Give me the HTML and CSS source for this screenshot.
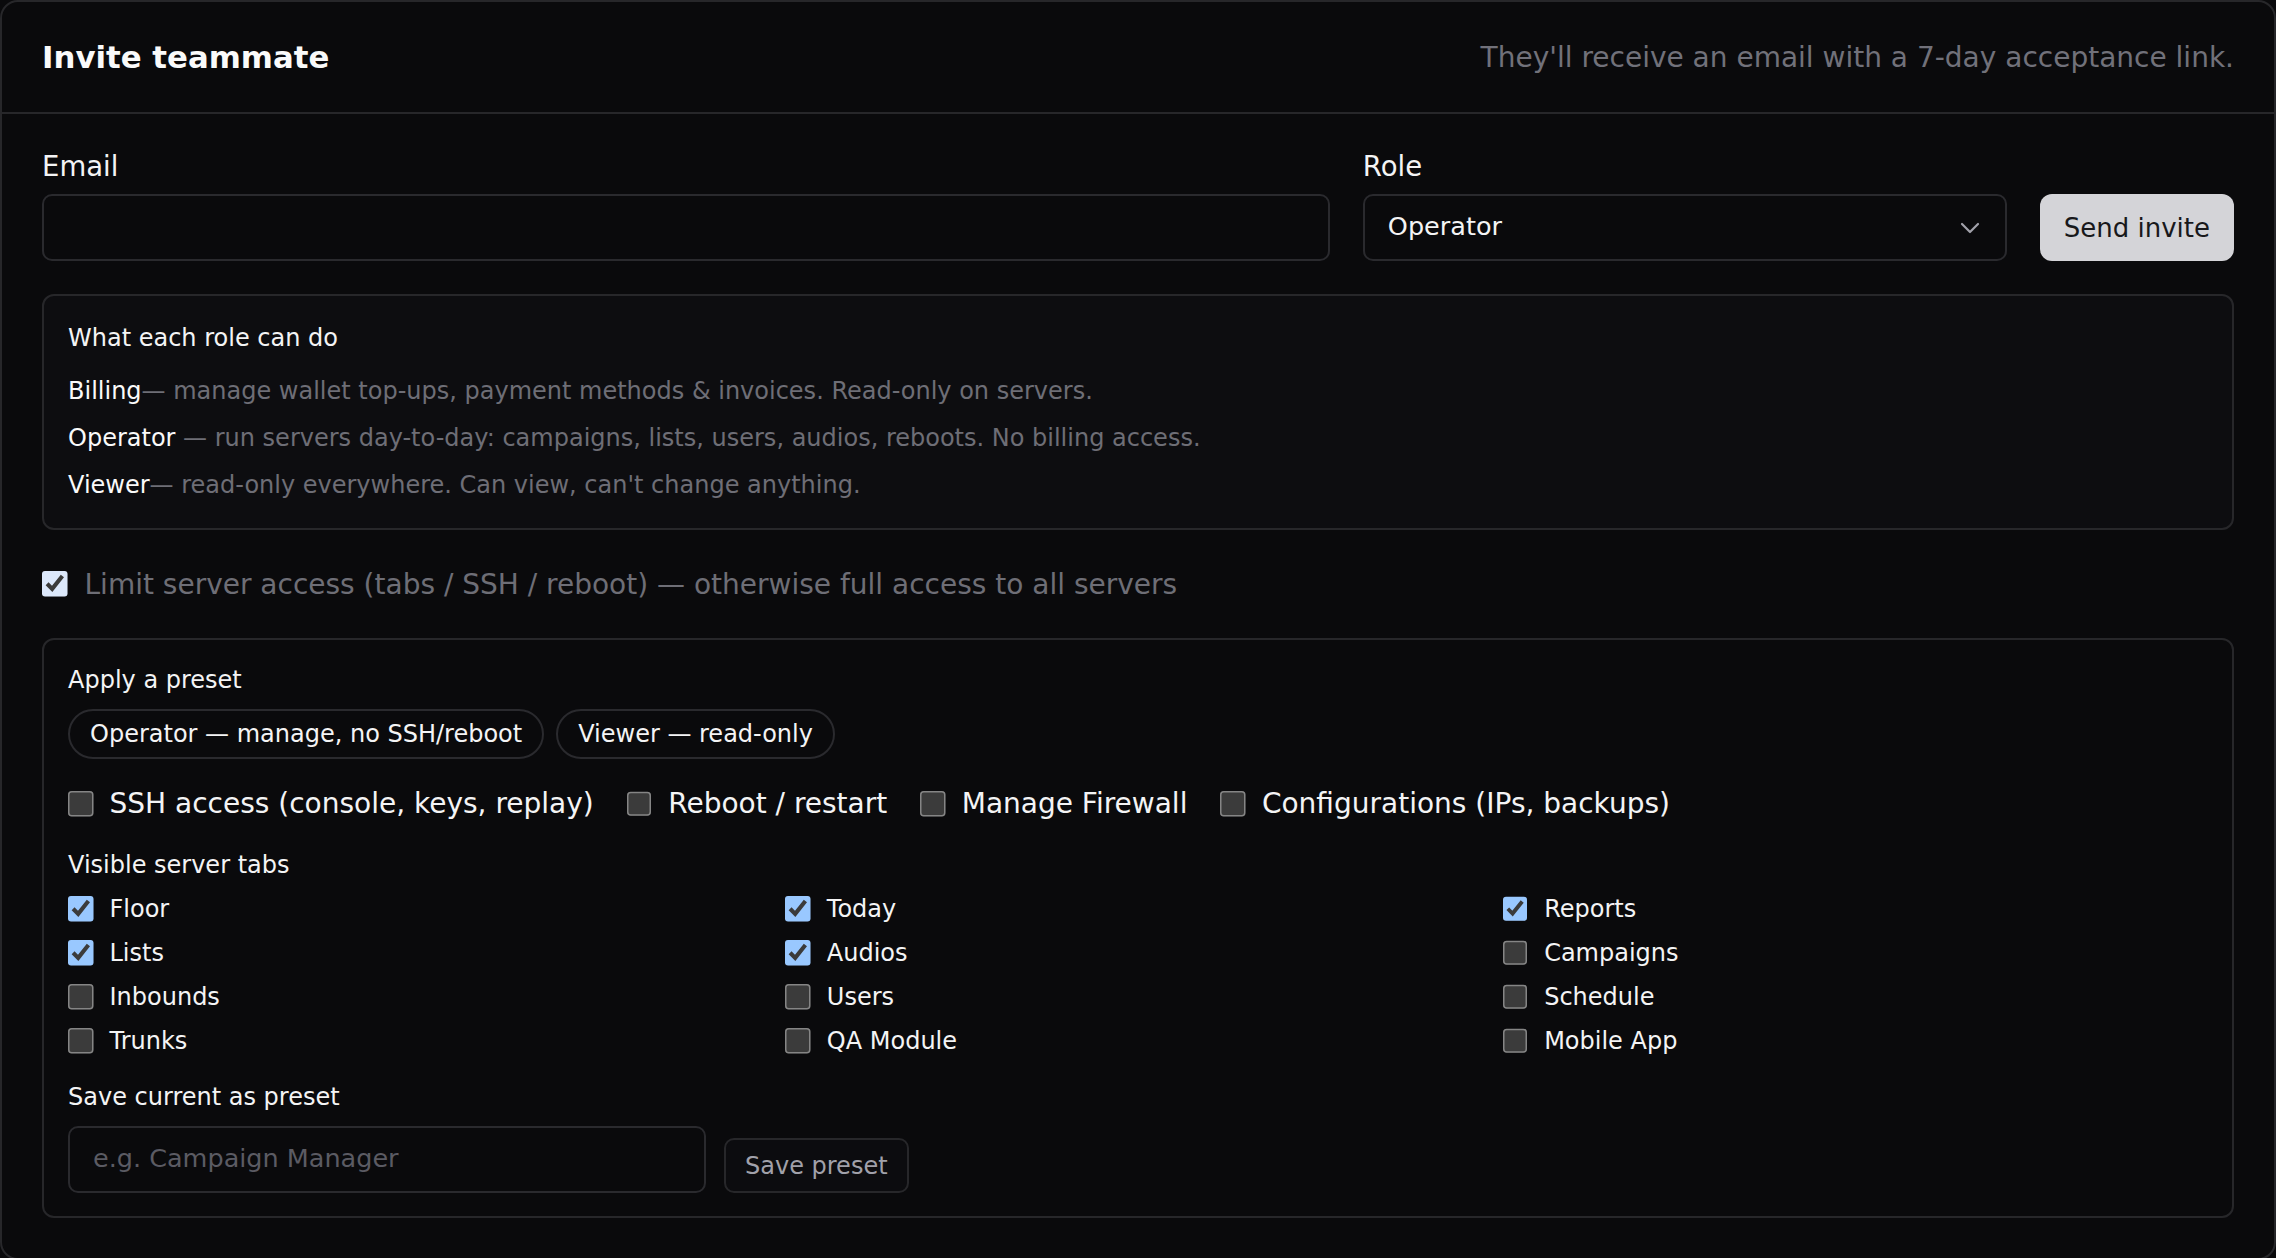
FILE: index.html
```html
<!DOCTYPE html>
<html lang="en">
<head>
  <meta charset="UTF-8">
  <meta name="viewport" content="width=device-width, initial-scale=1.0">
  <title>Invite teammate</title>
  <link rel="stylesheet" href="styles.css">
</head>
<body>
  <div class="card">
    <div class="card-head">
      <h2>Invite teammate</h2>
      <p class="head-note">They'll receive an email with a 7-day acceptance link.</p>
    </div>

    <div class="card-body">
      <div class="invite-row">
        <label class="field">
          <span class="field-label">Email</span>
          <input type="email" class="text-input">
        </label>
        <label class="field">
          <span class="field-label">Role</span>
          <span class="select-wrap">
            <select class="text-input">
              <option>Operator</option>
              <option>Billing</option>
              <option>Viewer</option>
            </select>
            <svg class="chevron" width="20" height="12" viewBox="0 0 20 12"><path d="M2 2 L10 10 L18 2" fill="none" stroke="#a1a1aa" stroke-width="2.2" stroke-linecap="round" stroke-linejoin="round"/></svg>
          </span>
        </label>
        <button class="btn-primary">Send invite</button>
      </div>

      <div class="roles">
        <div class="roles-title">What each role can do</div>
        <div class="role-line"><span class="role-name">Billing</span>— manage wallet top-ups, payment methods &amp; invoices. Read-only on servers.</div>
        <div class="role-line"><span class="role-name">Operator</span> — run servers day-to-day: campaigns, lists, users, audios, reboots. No billing access.</div>
        <div class="role-line"><span class="role-name">Viewer</span>— read-only everywhere. Can view, can't change anything.</div>
      </div>

      <label class="limit">
        <input type="checkbox" class="check check-limit" checked>
        <span>Limit server access (tabs / SSH / reboot) — otherwise full access to all servers</span>
      </label>

      <div class="perms">
        <div class="perms-label">Apply a preset</div>
        <div class="presets">
          <button class="pill">Operator — manage, no SSH/reboot</button>
          <button class="pill">Viewer — read-only</button>
        </div>

        <div class="perm-row">
          <label class="check-item"><input type="checkbox" class="check"> SSH access (console, keys, replay)</label>
          <label class="check-item"><input type="checkbox" class="check"> Reboot / restart</label>
          <label class="check-item"><input type="checkbox" class="check"> Manage Firewall</label>
          <label class="check-item"><input type="checkbox" class="check"> Configurations (IPs, backups)</label>
        </div>

        <div class="perms-label tabs-label">Visible server tabs</div>
        <div class="tabs-grid">
          <label class="check-item"><input type="checkbox" class="check" checked> Floor</label>
          <label class="check-item"><input type="checkbox" class="check" checked> Today</label>
          <label class="check-item"><input type="checkbox" class="check" checked> Reports</label>
          <label class="check-item"><input type="checkbox" class="check" checked> Lists</label>
          <label class="check-item"><input type="checkbox" class="check" checked> Audios</label>
          <label class="check-item"><input type="checkbox" class="check"> Campaigns</label>
          <label class="check-item"><input type="checkbox" class="check"> Inbounds</label>
          <label class="check-item"><input type="checkbox" class="check"> Users</label>
          <label class="check-item"><input type="checkbox" class="check"> Schedule</label>
          <label class="check-item"><input type="checkbox" class="check"> Trunks</label>
          <label class="check-item"><input type="checkbox" class="check"> QA Module</label>
          <label class="check-item"><input type="checkbox" class="check"> Mobile App</label>
        </div>

        <div class="perms-label save-label">Save current as preset</div>
        <div class="save-row">
          <input type="text" class="text-input preset-name" placeholder="e.g. Campaign Manager">
          <button class="btn-ghost">Save preset</button>
        </div>
      </div>
    </div>
  </div>
</body>
</html>
```

FILE: styles.css
```css
* {
  box-sizing: border-box;
}

html, body {
  margin: 0;
  background: #0a0a0c;
  color-scheme: dark;
}

body {
  font-family: "DejaVu Sans", "Liberation Sans", sans-serif;
  color: #f4f4f5;
}

.card {
  border: 2px solid #27272a;
  border-radius: 18px;
  background: #0a0a0c;
}

.card-head {
  display: flex;
  align-items: center;
  justify-content: space-between;
  height: 112px;
  padding: 0 40px;
  border-bottom: 2px solid #27272a;
}

.card-head h2 {
  margin: 0;
  font-size: 30.8px;
  font-weight: bold;
  color: #fafafa;
}

.head-note {
  margin: 0;
  font-size: 28px;
  color: #71717a;
}

.card-body {
  display: flex;
  flex-direction: column;
  gap: 33px;
  padding: 32px 40px 40px;
}

.invite-row {
  display: grid;
  grid-template-columns: 2fr 1fr auto;
  column-gap: 33px;
  align-items: end;
}

.field {
  display: flex;
  flex-direction: column;
}

.field-label {
  font-size: 27.5px;
  line-height: 40px;
  margin-bottom: 8px;
}

.text-input {
  width: 100%;
  height: 67px;
  padding: 0 23px 4px;
  border: 2px solid #2a2a2e;
  border-radius: 10px;
  background: #0a0a0c;
  color: #f4f4f5;
  font-family: inherit;
  font-size: 25.5px;
  outline: none;
}

.text-input::placeholder {
  color: #5b5b63;
}

.select-wrap {
  position: relative;
  display: block;
}

.select-wrap select {
  appearance: none;
  -webkit-appearance: none;
}

.chevron {
  position: absolute;
  right: 27px;
  top: 28px;
  pointer-events: none;
}

.btn-primary {
  height: 67px;
  padding: 0 24px;
  border: none;
  border-radius: 12px;
  background: #d4d4d8;
  color: #18181b;
  font-family: inherit;
  font-size: 26px;
  cursor: pointer;
}

.roles {
  padding: 24px 24px 25px;
  border: 2px solid #27272a;
  border-radius: 12px;
  background: #0d0d10;
  font-size: 24px;
  line-height: 36px;
}

.roles-title {
  margin-bottom: 17px;
}

.role-line {
  color: #6e6e76;
  margin-bottom: 11px;
}

.role-line:last-child {
  margin-bottom: 0;
}

.role-name {
  color: #fafafa;
}

.check {
  zoom: 1.5;
  width: 17px;
  height: 17px;
  margin: 0;
  flex-shrink: 0;
}

.check-limit {
  accent-color: #dce8fb;
}

.limit {
  display: flex;
  align-items: center;
  gap: 17px;
  height: 42px;
  font-size: 28px;
  color: #6e6e76;
}

.perms {
  padding: 22px 24px 23px;
  border: 2px solid #27272a;
  border-radius: 12px;
}

.perms-label {
  font-size: 24px;
  line-height: 36px;
  margin-bottom: 11px;
}

.presets {
  display: flex;
  gap: 12px;
}

.pill {
  padding: 8px 20px;
  border: 2px solid #2a2a2e;
  border-radius: 999px;
  background: transparent;
  color: #f4f4f5;
  font-family: inherit;
  font-size: 24px;
  line-height: 30px;
  cursor: pointer;
}

.perm-row {
  display: flex;
  gap: 33px;
  margin-top: 24px;
  font-size: 28px;
  line-height: 42px;
}

.check-item {
  display: flex;
  align-items: center;
  gap: 16px;
}

.tabs-label {
  margin-top: 22px;
  margin-bottom: 8px;
}

.tabs-grid {
  display: grid;
  grid-template-columns: repeat(3, 1fr);
  column-gap: 12px;
  row-gap: 8px;
  font-size: 24px;
  line-height: 36px;
}

.save-label {
  margin-top: 20px;
}

.save-row {
  display: flex;
  align-items: flex-end;
  gap: 18px;
}

.preset-name {
  width: 638px;
}

.btn-ghost {
  height: 55px;
  padding: 0 19px;
  border: 2px solid #27272a;
  border-radius: 10px;
  background: #0c0c0f;
  color: #a1a1aa;
  font-family: inherit;
  font-size: 24px;
  cursor: pointer;
}
```
